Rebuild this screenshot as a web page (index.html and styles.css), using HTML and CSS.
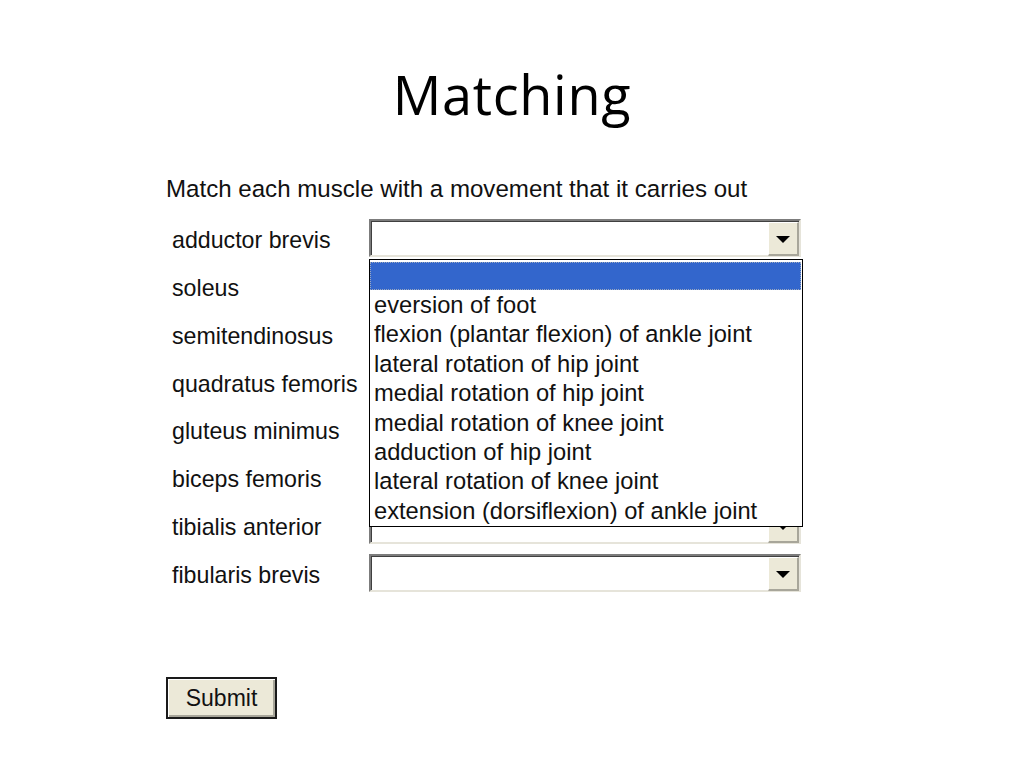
FILE: index.html
```html
<!DOCTYPE html>
<html lang="en">
<head>
    <meta charset="UTF-8">
    <title>Matching</title>
    <link rel="stylesheet" href="styles.css">
</head>
<body>
    <h1 class="title">Matching</h1>
    <div class="quiz">
        <p class="prompt">Match each muscle with a movement that it carries out</p>
        <div class="pairs">
            <div class="pair">
                <span class="muscle">adductor brevis</span>
                <div class="select open">
                    <span class="select-arrow"></span>
                    <ul class="options">
                        <li class="option selected"></li>
                        <li class="option">eversion of foot</li>
                        <li class="option">flexion (plantar flexion) of ankle joint</li>
                        <li class="option">lateral rotation of hip joint</li>
                        <li class="option">medial rotation of hip joint</li>
                        <li class="option">medial rotation of knee joint</li>
                        <li class="option">adduction of hip joint</li>
                        <li class="option">lateral rotation of knee joint</li>
                        <li class="option">extension (dorsiflexion) of ankle joint</li>
                    </ul>
                </div>
            </div>
            <div class="pair">
                <span class="muscle">soleus</span>
                <div class="select"><span class="select-arrow"></span></div>
            </div>
            <div class="pair">
                <span class="muscle">semitendinosus</span>
                <div class="select"><span class="select-arrow"></span></div>
            </div>
            <div class="pair">
                <span class="muscle">quadratus femoris</span>
                <div class="select"><span class="select-arrow"></span></div>
            </div>
            <div class="pair">
                <span class="muscle">gluteus minimus</span>
                <div class="select"><span class="select-arrow"></span></div>
            </div>
            <div class="pair">
                <span class="muscle">biceps femoris</span>
                <div class="select"><span class="select-arrow"></span></div>
            </div>
            <div class="pair">
                <span class="muscle">tibialis anterior</span>
                <div class="select"><span class="select-arrow"></span></div>
            </div>
            <div class="pair">
                <span class="muscle">fibularis brevis</span>
                <div class="select"><span class="select-arrow"></span></div>
            </div>
        </div>
        <button class="submit">Submit</button>
    </div>
</body>
</html>
```

FILE: styles.css
```css
body {
    margin: 0;
    background-color: #fff;
    color: #000;
    font-family: "Liberation Sans", Arial, sans-serif;
}

.title {
    margin: 0;
    padding-top: 62px;
    font-family: "Open Sans", Lato, sans-serif;
    font-weight: normal;
    font-size: 54px;
    letter-spacing: 0.7px;
    line-height: 64px;
    text-align: center;
}

.quiz {
    margin-left: 166px;
    width: 640px;
}

.prompt {
    margin: 50px 0 0;
    font-size: 24.1px;
    line-height: 26px;
    color: #111;
}

.pairs {
    display: grid;
    row-gap: 9.86px;
    margin-top: 17px;
}

.pair {
    display: flex;
    align-items: center;
    height: 38px;
}

.muscle {
    width: 197px;
    padding-left: 6px;
    padding-top: 5px;
    font-size: 23.2px;
    color: #111;
}

.select {
    position: relative;
    box-sizing: border-box;
    width: 432px;
    height: 38px;
    background-color: #fff;
    border-top: 2px solid #7c7c7c;
    border-left: 2px solid #7c7c7c;
    border-bottom: 2px solid #e6e4da;
    border-right: 2px solid #e6e4da;
    box-shadow: inset 1px 1px 0 #404040;
}

.select-arrow {
    position: absolute;
    top: 1px;
    right: 0;
    width: 31px;
    height: 34px;
    box-sizing: border-box;
    background-color: #ece9d8;
    border-top: 1px solid #fff;
    border-left: 1px solid #fff;
    border-bottom: 2px solid #a8a69a;
    border-right: 2px solid #a8a69a;
}

.select-arrow::after {
    content: "";
    position: absolute;
    left: 7px;
    top: 13px;
    border-left: 7px solid transparent;
    border-right: 7px solid transparent;
    border-top: 7px solid #000;
}

/* open dropdown list drawn over the rows below */
.options {
    position: absolute;
    top: 38px;
    left: -2px;
    width: 434px;
    box-sizing: border-box;
    margin: 0;
    padding: 1px 0 0;
    list-style: none;
    background-color: #fff;
    border: 1px solid #000;
    z-index: 2;
}

.option {
    height: 29.4px;
    padding-left: 4px;
    font-size: 23.7px;
    line-height: 29.4px;
    white-space: nowrap;
    color: #111;
}

.option.selected {
    height: 28px;
    margin: 1px 1px 1px 0;
    background-color: #3366cc;
    outline: 1px dotted #9aa8c0;
    outline-offset: -1px;
}

.submit {
    display: block;
    margin-top: 85px;
    width: 111px;
    height: 42px;
    padding: 0;
    font-family: "Liberation Sans", Arial, sans-serif;
    font-size: 23px;
    color: #111;
    background-color: #ece9d8;
    border: 2px solid #1a1a1a;
    box-shadow: inset 1px 1px 0 #fff, inset -2px -2px 0 #a8a69a;
}
```
